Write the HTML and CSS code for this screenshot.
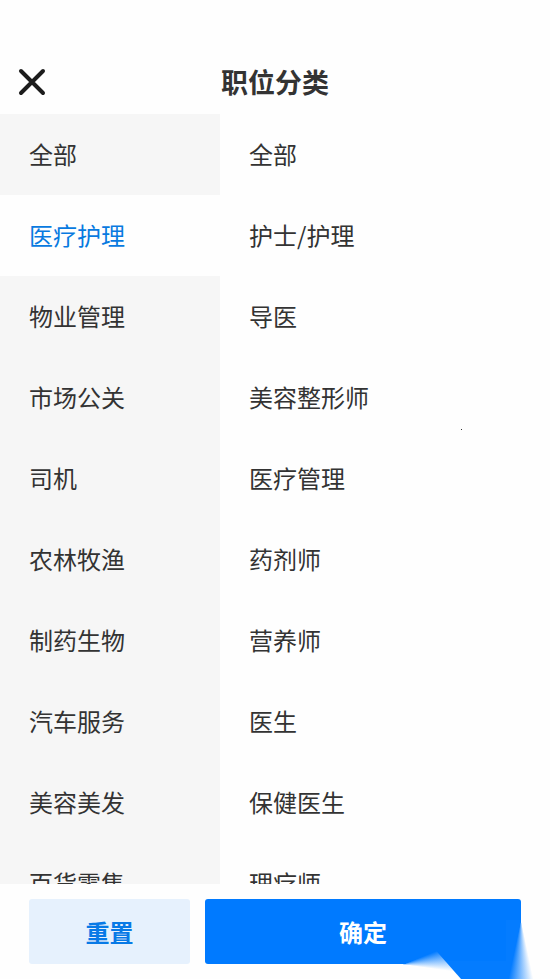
FILE: index.html
```html
<!DOCTYPE html>
<html lang="zh-CN">
<head>
    <meta charset="UTF-8">
    <meta name="viewport" content="width=device-width, initial-scale=1.0">
    <title>职位分类</title>
    <link rel="stylesheet" href="styles.css">
</head>
<body>
    <header class="header">
        <button type="button" class="close" aria-label="关闭">
            <svg width="28" height="28" viewBox="0 0 28 28" fill="none" stroke="#1c1c1c" stroke-width="4" stroke-linecap="round">
                <path d="M3 3L25 25M25 3L3 25"/>
            </svg>
        </button>
        <h1>职位分类</h1>
    </header>

    <main class="picker">
        <nav class="categories">
            <button type="button">全部</button>
            <button type="button" class="active">医疗护理</button>
            <button type="button">物业管理</button>
            <button type="button">市场公关</button>
            <button type="button">司机</button>
            <button type="button">农林牧渔</button>
            <button type="button">制药生物</button>
            <button type="button">汽车服务</button>
            <button type="button">美容美发</button>
            <button type="button">百货零售</button>
        </nav>
        <div class="jobs">
            <button type="button">全部</button>
            <button type="button">护士/护理</button>
            <button type="button">导医</button>
            <button type="button">美容整形师</button>
            <button type="button">医疗管理</button>
            <button type="button">药剂师</button>
            <button type="button">营养师</button>
            <button type="button">医生</button>
            <button type="button">保健医生</button>
            <button type="button">理疗师</button>
        </div>
        <span class="dot"></span>
    </main>

    <footer class="footer">
        <button type="button" class="btn reset">重置</button>
        <button type="button" class="btn confirm">确定</button>
        <span class="swoosh-base"></span>
        <span class="swoosh-fold"></span>
        <span class="swoosh-edge"></span>
    </footer>
</body>
</html>
```

FILE: styles.css
```css
* { box-sizing: border-box; }
body {
    display: flex;
    flex-direction: column;
    height: 100vh;
    margin: 0;
    background: #fefefe;
    color: #333;
    font-family: "Noto Sans CJK SC", sans-serif;
}
button {
    margin: 0;
    padding: 0;
    border: none;
    background: none;
    color: inherit;
    font: inherit;
    cursor: pointer;
}

.header {
    display: grid;
    grid-template-columns: 28px 1fr 28px;
    align-items: center;
    padding: 62px 18px 12px;
}
.header h1 {
    margin: 0;
    font-size: 27px;
    line-height: 40px;
    font-weight: 700;
    text-align: center;
}
.close { height: 28px; }
.close svg { display: block; }

.picker {
    position: relative;
    display: flex;
    flex: 1;
    min-height: 0;
}
.categories, .jobs {
    overflow-y: auto;
    scrollbar-width: none;
}
.categories { width: 40%; background: #f6f6f6; }
.jobs { flex: 1; }
.categories button, .jobs button {
    display: block;
    width: 100%;
    padding: 0 29px 1px;
    font-size: 24px;
    line-height: 80px;
    text-align: left;
}
.categories .active { background: #fefefe; color: #087ae0; }
.dot {
    position: absolute;
    top: 315px;
    right: 88px;
    width: 1px;
    height: 1px;
    background: #333;
}

.footer {
    position: relative;
    display: grid;
    grid-template-columns: 161fr 316fr;
    gap: 15px;
    padding: 15px 29px;
}
.btn {
    height: 65px;
    padding-bottom: 1px;
    border-radius: 3px;
    font-size: 24px;
    font-weight: 700;
}
.reset { background: #e6f1fd; color: #087ae6; }
.confirm { background: #007aff; color: #fff; }

/* blue sweep under the confirm button */
.swoosh-base, .swoosh-fold, .swoosh-edge {
    position: absolute;
    bottom: 0;
    pointer-events: none;
}
.swoosh-base {
    right: 29px;
    width: 82px;
    height: 18px;
    background: #047cff;
    clip-path: polygon(0 0, 100% 0, 100% 100%, 20% 100%);
}
.swoosh-fold {
    right: 89px;
    width: 58px;
    height: 29px;
    background: conic-gradient(at 0 50%, #007aff 68deg, #fefefe 98deg);
    clip-path: polygon(0 50%, 56% 0, 100% 100%, 0 100%);
}
.swoosh-edge {
    right: 14px;
    width: 30px;
    height: 59px;
    background: conic-gradient(at 50% 0, #fefefe 168deg, #047cff 192deg);
}
```
